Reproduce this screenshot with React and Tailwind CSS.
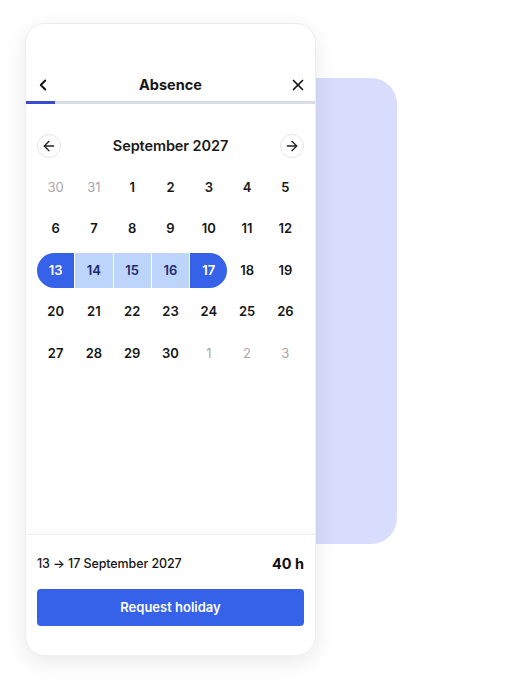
import React from "react";
import { ChevronLeft, X, ArrowLeft, ArrowRight } from "lucide-react";

const rows = [
  [["30", "muted"], ["31", "muted"], ["1"], ["2"], ["3"], ["4"], ["5"]],
  [["6"], ["7"], ["8"], ["9"], ["10"], ["11"], ["12"]],
  [["13", "start"], ["14", "mid"], ["15", "mid"], ["16", "mid"], ["17", "end"], ["18"], ["19"]],
  [["20"], ["21"], ["22"], ["23"], ["24"], ["25"], ["26"]],
  [["27"], ["28"], ["29"], ["30"], ["1", "muted"], ["2", "muted"], ["3", "muted"]],
];

function Day({ label, kind }) {
  if (kind === "start")
    return (
      <div className="h-[35px] flex items-center justify-center bg-[#3562e8] text-white font-semibold rounded-l-full">
        {label}
      </div>
    );
  if (kind === "end")
    return (
      <div className="h-[35px] flex items-center justify-center bg-[#3562e8] text-white font-semibold rounded-r-full">
        {label}
      </div>
    );
  if (kind === "mid")
    return (
      <div className="h-[35px] flex items-center justify-center bg-[#bdd4fb] text-[#1c2a6e] font-semibold">
        {label}
      </div>
    );
  if (kind === "muted")
    return (
      <div className="h-[35px] flex items-center justify-center text-[#a8a8a8] font-normal">
        {label}
      </div>
    );
  return (
    <div className="h-[35px] flex items-center justify-center text-[#161616] font-semibold">
      {label}
    </div>
  );
}

export default function App() {
  return (
    <div
      className="relative w-[520px] h-[681px] bg-white overflow-hidden pl-[25px] pt-[23px]"
      style={{ fontFamily: "Inter, 'Noto Sans', sans-serif" }}
    >
      <div className="absolute left-[280px] top-[78px] w-[117px] h-[466px] rounded-r-[26px] bg-[#d9ddfd]" />
      <div className="relative w-[291px] h-[633px] bg-white rounded-[20px] border border-[#eceef1] shadow-[0_6px_22px_rgba(0,0,0,0.09)] flex flex-col overflow-hidden">
        <div className="pt-[42px]">
          <div className="h-[35px] pt-[2px] px-[8px] flex items-center justify-between">
            <div className="w-[18px] h-[18px] flex items-center justify-center text-[#111]">
              <ChevronLeft size={18} strokeWidth={2.5} />
            </div>
            <div className="text-[14.5px] font-bold text-[#161616]">Absence</div>
            <div className="w-[18px] h-[18px] flex items-center justify-center text-[#111]">
              <X size={18} strokeWidth={2.2} />
            </div>
          </div>
          <div className="h-[3px] bg-[#d8dde8] flex">
            <div className="w-[29px] h-full bg-[#3a4bd0]" />
          </div>
        </div>

        <div className="flex-1 px-[11px] pt-[30px]">
          <div className="flex items-center justify-between h-[24px]">
            <div className="w-[24px] h-[24px] rounded-full border border-[#e4e6ea] flex items-center justify-center text-[#222]">
              <ArrowLeft size={16} strokeWidth={2} />
            </div>
            <div className="text-[14.5px] font-semibold text-[#1a1a1a] tracking-[-0.1px]">September 2027</div>
            <div className="w-[24px] h-[24px] rounded-full border border-[#e4e6ea] flex items-center justify-center text-[#222]">
              <ArrowRight size={16} strokeWidth={2} />
            </div>
          </div>
          <div className="mt-[12px] grid grid-cols-7 gap-x-[1px] gap-y-[6.5px] text-[13px]">
            {rows.flat().map(([label, kind], i) => (
              <Day key={i} label={label} kind={kind} />
            ))}
          </div>
        </div>

        <div className="h-[121px] border-t border-[#f0f1f3] shadow-[0_-3px_8px_rgba(0,0,0,0.035)] px-[11px] pt-[19px]">
          <div className="flex items-center justify-between h-[20px]">
            <div className="text-[12.5px] font-medium text-[#161616] tracking-[-0.1px]">13 → 17 September 2027</div>
            <div className="text-[14.5px] font-bold text-[#111]">40 h</div>
          </div>
          <button className="mt-[15px] w-full h-[37px] rounded-[4px] bg-[#3562e8] text-white text-[13px] font-semibold flex items-center justify-center">
            Request holiday
          </button>
        </div>
      </div>
    </div>
  );
}
